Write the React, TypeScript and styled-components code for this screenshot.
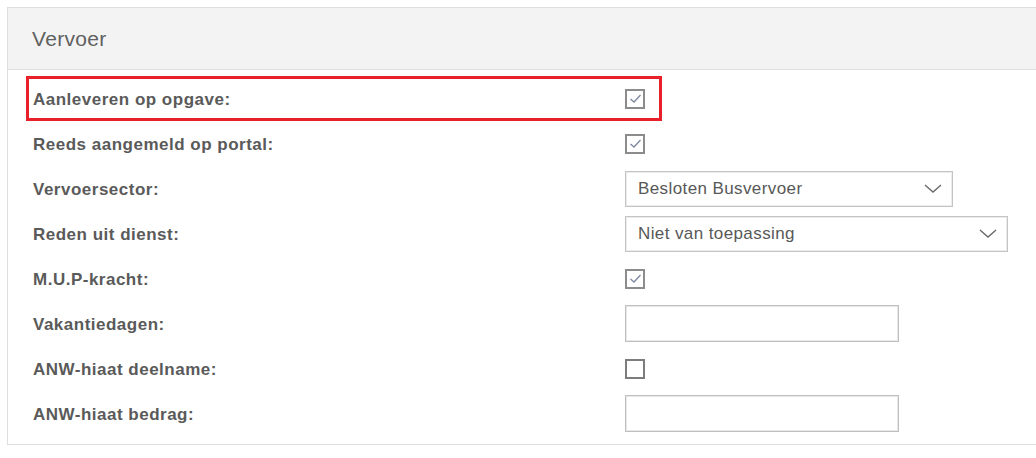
import React from "react";
import styled, { createGlobalStyle } from "styled-components";

const Global = createGlobalStyle`
  html, body { margin: 0; padding: 0; background: #ffffff; overflow: hidden; }
  body { font-family: "Liberation Sans", Arial, sans-serif; }
`;

const Page = styled.div`
  padding: 7px 0 0 7px;
  width: 1060px;
`;

const Panel = styled.section`
  border: 1px solid #dedede;
  background: #ffffff;
`;

const Header = styled.div`
  height: 61px;
  background: #f3f3f3;
  border-bottom: 1px solid #dedede;
  display: flex;
  align-items: center;
  padding-left: 24px;
  font-size: 21px;
  letter-spacing: 0.3px;
  color: #606060;
`;

const Body = styled.div`
  padding: 6px 0 8px 18px;
`;

const Row = styled.div<{ $highlight?: boolean }>`
  display: grid;
  grid-template-columns: 599px auto;
  align-items: center;
  height: 45px;
  box-sizing: border-box;
  width: ${(p) => (p.$highlight ? "636px" : "auto")};
  box-shadow: ${(p) => (p.$highlight ? "inset 0 0 0 3px #e8202a" : "none")};
  justify-content: start;
`;

const Label = styled.label`
  padding-left: 7px;
  padding-top: 2px;
  font-size: 17px;
  letter-spacing: 0.5px;
  font-weight: bold;
  color: #5a5a5a;
`;

const Box = styled.span<{ $checked?: boolean }>`
  width: 20px;
  height: 20px;
  box-sizing: border-box;
  border: 2px solid ${(p) => (p.$checked ? "#8c8c8c" : "#7c7c7c")};
  background: #fff;
  display: flex;
  align-items: center;
  justify-content: center;
`;

const SelectBox = styled.div<{ $w: number }>`
  width: ${(p) => p.$w}px;
  height: 36px;
  box-sizing: border-box;
  border: 1px solid #c4c4c4;
  box-shadow: inset 0 0 0 1px #ececec;
  display: flex;
  align-items: center;
  justify-content: space-between;
  padding: 0 10px 0 12px;
  font-size: 17px;
  letter-spacing: 0.4px;
  color: #585858;
  background: #fff;
`;

const TextInput = styled.div`
  width: 274px;
  height: 37px;
  box-sizing: border-box;
  border: 1px solid #bfbfbf;
  box-shadow: inset 0 0 0 1px #e8e8e8;
  background: #fff;
`;

const Check = ({ checked }: { checked?: boolean }) => (
  <Box $checked={checked}>
    {checked && (
      <svg width="13" height="11" viewBox="0 0 13 11">
        <polyline points="1.5,6 5,9 11.5,2" fill="none" stroke="#7d88a0" strokeWidth="1.3" />
      </svg>
    )}
  </Box>
);

const Chevron = () => (
  <svg width="18" height="9" viewBox="0 0 18 9">
    <polyline points="1,1 9,8 17,1" fill="none" stroke="#6a6a6a" strokeWidth="1.4" />
  </svg>
);

const Select = ({ value, width }: { value: string; width: number }) => (
  <SelectBox $w={width}>
    <span>{value}</span>
    <Chevron />
  </SelectBox>
);

export default function App() {
  return (
    <Page>
      <Global />
      <Panel>
        <Header>Vervoer</Header>
        <Body>
          <Row $highlight>
            <Label>Aanleveren op opgave:</Label>
            <Check checked />
          </Row>
          <Row>
            <Label>Reeds aangemeld op portal:</Label>
            <Check checked />
          </Row>
          <Row>
            <Label>Vervoersector:</Label>
            <Select value="Besloten Busvervoer" width={328} />
          </Row>
          <Row>
            <Label>Reden uit dienst:</Label>
            <Select value="Niet van toepassing" width={383} />
          </Row>
          <Row>
            <Label>M.U.P-kracht:</Label>
            <Check checked />
          </Row>
          <Row>
            <Label>Vakantiedagen:</Label>
            <TextInput />
          </Row>
          <Row>
            <Label>ANW-hiaat deelname:</Label>
            <Check />
          </Row>
          <Row>
            <Label>ANW-hiaat bedrag:</Label>
            <TextInput />
          </Row>
        </Body>
      </Panel>
    </Page>
  );
}
